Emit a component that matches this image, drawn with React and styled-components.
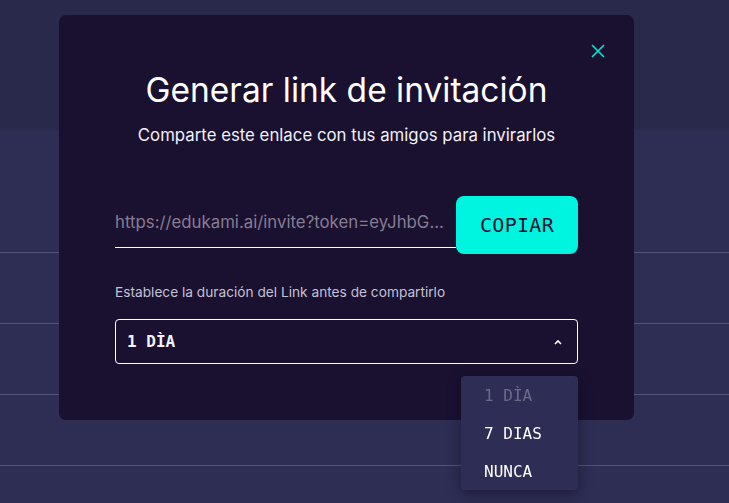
import React from 'react';
import styled, { createGlobalStyle } from 'styled-components';

const GlobalStyle = createGlobalStyle`
  html, body {
    margin: 0;
    padding: 0;
    background: #2e2e55;
    font-family: Inter, "Noto Sans", sans-serif;
    overflow: hidden;
  }
  * { box-sizing: border-box; }
`;

const Page = styled.div`
  width: 100%;
  height: 100vh;
  background: #2e2e55;
  overflow: hidden;
`;

const TopBand = styled.header`
  height: 130px;
  background: #29294c;
`;

const Lead = styled.div`
  height: 122px;
`;

const Row = styled.div`
  height: 71px;
  border-top: 1px solid #55557a;
`;

const Overlay = styled.div`
  position: fixed;
  inset: 0;
`;

const Modal = styled.div`
  position: absolute;
  left: 59px;
  top: 15px;
  width: 575px;
  height: 405px;
  background: #1a1030;
  border-radius: 7px;
  padding: 55px 56px 0;
  display: flex;
  flex-direction: column;
`;

const Close = styled.button`
  position: absolute;
  top: 27px;
  right: 27px;
  width: 18px;
  height: 18px;
  padding: 0;
  border: none;
  background: none;
  display: flex;
  align-items: center;
  justify-content: center;
  cursor: pointer;
`;

const Title = styled.h1`
  margin: 0;
  font-weight: 400;
  font-size: 33.5px;
  line-height: 40px;
  color: #ffffff;
  text-align: center;
`;

const Subtitle = styled.p`
  margin: 14px 0 0;
  font-size: 16.8px;
  line-height: 22px;
  color: #f2f0f8;
  text-align: center;
`;

const LinkRow = styled.div`
  display: flex;
  align-items: stretch;
  margin-top: 50px;
  height: 58px;
`;

const LinkField = styled.div`
  flex: 1;
  display: flex;
  align-items: center;
  height: 52px;
  border-bottom: 1.5px solid #ffffff;
  font-size: 16.8px;
  color: #877d92;
  white-space: nowrap;
  overflow: hidden;
`;

const CopyButton = styled.button`
  width: 122px;
  border: none;
  border-radius: 8px;
  background: #00f5e0;
  color: #1a1030;
  font-family: "DejaVu Sans Mono", "Liberation Mono", monospace;
  font-size: 20px;
  letter-spacing: 0.3px;
  cursor: pointer;
`;

const Label = styled.div`
  margin-top: 28px;
  font-size: 13.7px;
  line-height: 20px;
  color: #c4c2d4;
`;

const SelectWrap = styled.div`
  position: relative;
  margin-top: 17px;
`;

const SelectBox = styled.div`
  height: 45px;
  border: 1px solid #ffffff;
  border-radius: 4px;
  display: flex;
  align-items: center;
  justify-content: space-between;
  padding: 0 14px 0 11px;
  font-family: "DejaVu Sans Mono", "Liberation Mono", monospace;
  font-size: 16px;
  font-weight: bold;
  color: #f4f2fa;
`;

const Menu = styled.ul`
  position: absolute;
  right: 0;
  top: 57px;
  width: 117px;
  margin: 0;
  padding: 0;
  list-style: none;
  background: #2e2d55;
  border-radius: 4px;
  box-shadow: 0 4px 14px rgba(10, 6, 25, 0.45);
`;

const MenuItem = styled.li`
  height: 38px;
  display: flex;
  align-items: center;
  padding-left: 23px;
  font-family: "DejaVu Sans Mono", "Liberation Mono", monospace;
  font-size: 16px;
  color: ${({ disabled }) => (disabled ? '#6c6a88' : '#ffffff')};
`;

const Chevron = () => (
  <svg width="10" height="6" viewBox="0 0 10 6">
    <path d="M2 5 L5 2 L8 5" stroke="#ffffff" strokeWidth="1.6" fill="none" />
  </svg>
);

const XIcon = () => (
  <svg width="14" height="14" viewBox="0 0 14 14">
    <path d="M1 1 L13 13 M13 1 L1 13" stroke="#00e8d4" strokeWidth="1.6" />
  </svg>
);

const options = [
  { label: '1 DÌA', disabled: true },
  { label: '7 DIAS' },
  { label: 'NUNCA' },
];

export default function App() {
  return (
    <>
      <GlobalStyle />
      <Page>
        <TopBand />
        <Lead />
        <Row />
        <Row />
        <Row />
        <Row />
      </Page>
      <Overlay>
        <Modal>
          <Close aria-label="Cerrar">
            <XIcon />
          </Close>
          <Title>Generar link de invitación</Title>
          <Subtitle>Comparte este enlace con tus amigos para invirarlos</Subtitle>
          <LinkRow>
            <LinkField>https://edukami.ai/invite?token=eyJhbG...</LinkField>
            <CopyButton>COPIAR</CopyButton>
          </LinkRow>
          <Label>Establece la duración del Link antes de compartirlo</Label>
          <SelectWrap>
            <SelectBox>
              <span>1 DÌA</span>
              <Chevron />
            </SelectBox>
            <Menu>
              {options.map((o) => (
                <MenuItem key={o.label} disabled={o.disabled}>
                  {o.label}
                </MenuItem>
              ))}
            </Menu>
          </SelectWrap>
        </Modal>
      </Overlay>
    </>
  );
}
